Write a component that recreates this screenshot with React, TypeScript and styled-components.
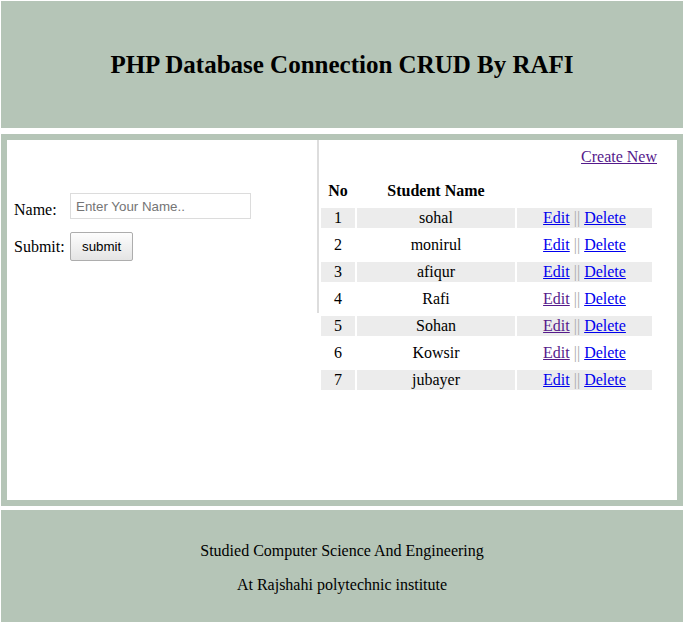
import React from "react";
import styled, { createGlobalStyle } from "styled-components";

const GREEN = "#b5c5b7";

const GlobalStyle = createGlobalStyle`
  html, body {
    margin: 0;
    padding: 0;
    background: #ffffff;
    font-family: "Liberation Serif", "Times New Roman", serif;
    font-size: 16px;
    color: #000;
  }
`;

const Page = styled.div`
  padding: 1px 3px 0 1px;
`;

const Header = styled.header`
  background: ${GREEN};
  padding: 30px 0;
  text-align: center;
`;

const Title = styled.h2`
  margin: 19.5px 0;
  font-size: 25px;
  font-weight: bold;
`;

const Main = styled.main`
  margin-top: 6px;
  border: 6px solid ${GREEN};
  height: 360px;
  display: flex;
  align-items: flex-start;
`;

const LeftPane = styled.section`
  width: 303px;
  height: 120px;
  padding: 53px 0 0 7px;
  border-right: 2px solid #dddddd;
  display: flex;
  flex-direction: column;
  gap: 13px;
`;

const FormRow = styled.div`
  display: flex;
  align-items: center;
`;

const Label = styled.label<{ $drop?: number }>`
  width: 56px;
  line-height: 18px;
  margin-top: ${(p) => p.$drop ?? 0}px;
`;

const TextInput = styled.input`
  box-sizing: border-box;
  width: 181px;
  height: 26px;
  border: 1px solid #dcdcdc;
  padding: 0 5px;
  font-family: "Liberation Sans", Arial, sans-serif;
  font-size: 13.333px;
  color: #000;
  outline: none;
  &::placeholder {
    color: #757575;
  }
`;

const SubmitButton = styled.button`
  box-sizing: border-box;
  height: 29px;
  padding: 0 11px;
  border: 1px solid #adadad;
  border-radius: 2px;
  background: linear-gradient(#fdfdfd, #e4e4e4);
  font-family: "Liberation Sans", Arial, sans-serif;
  font-size: 13.333px;
  color: #000;
`;

const RightPane = styled.section`
  flex: 1;
  padding-top: 8px;
`;

const CreateRow = styled.div`
  text-align: right;
  padding-right: 20px;
  line-height: 18px;
`;

const Link = styled.a<{ $visited?: boolean }>`
  color: ${(p) => (p.$visited ? "#551a8b" : "#0000ee")};
  text-decoration: underline;
  cursor: pointer;
`;

const Table = styled.table`
  margin-top: 8px;
  width: 335px;
  table-layout: fixed;
  border-collapse: separate;
  border-spacing: 2px 7px;
`;

const Col = styled.col<{ $w: number }>`
  width: ${(p) => p.$w}px;
`;

const HeadCell = styled.th`
  padding: 1px;
  height: 18px;
  line-height: 18px;
  font-weight: bold;
  text-align: center;
`;

const Cell = styled.td<{ $shade?: boolean }>`
  padding: 1px;
  height: 18px;
  line-height: 18px;
  text-align: center;
  background: ${(p) => (p.$shade ? "#ececec" : "transparent")};
`;

const Sep = styled.span`
  color: #a8a8a8;
`;

const Footer = styled.footer`
  margin-top: 4px;
  background: ${GREEN};
  padding: 16px 0;
  text-align: center;
`;

const FootLine = styled.p`
  margin: 16px 0;
  line-height: 18px;
`;

const students = [
  { no: 1, name: "sohal", visited: false },
  { no: 2, name: "monirul", visited: false },
  { no: 3, name: "afiqur", visited: false },
  { no: 4, name: "Rafi", visited: true },
  { no: 5, name: "Sohan", visited: true },
  { no: 6, name: "Kowsir", visited: true },
  { no: 7, name: "jubayer", visited: false },
];

export default function App() {
  return (
    <Page>
      <GlobalStyle />
      <Header>
        <Title>PHP Database Connection CRUD By RAFI</Title>
      </Header>
      <Main>
        <LeftPane>
          <FormRow>
            <Label $drop={8}>Name:</Label>
            <TextInput placeholder="Enter Your Name.." />
          </FormRow>
          <FormRow>
            <Label>Submit:</Label>
            <SubmitButton type="button">submit</SubmitButton>
          </FormRow>
        </LeftPane>
        <RightPane>
          <CreateRow>
            <Link $visited>Create New</Link>
          </CreateRow>
          <Table>
            <colgroup>
              <Col $w={34} />
              <Col $w={158} />
              <Col $w={135} />
            </colgroup>
            <thead>
              <tr>
                <HeadCell>No</HeadCell>
                <HeadCell>Student Name</HeadCell>
                <HeadCell />
              </tr>
            </thead>
            <tbody>
              {students.map((s, i) => (
                <tr key={s.no}>
                  <Cell $shade={i % 2 === 0}>{s.no}</Cell>
                  <Cell $shade={i % 2 === 0}>{s.name}</Cell>
                  <Cell $shade={i % 2 === 0}>
                    <Link $visited={s.visited}>Edit</Link> <Sep>||</Sep>{" "}
                    <Link>Delete</Link>
                  </Cell>
                </tr>
              ))}
            </tbody>
          </Table>
        </RightPane>
      </Main>
      <Footer>
        <FootLine>Studied Computer Science And Engineering</FootLine>
        <FootLine>At Rajshahi polytechnic institute</FootLine>
      </Footer>
    </Page>
  );
}
